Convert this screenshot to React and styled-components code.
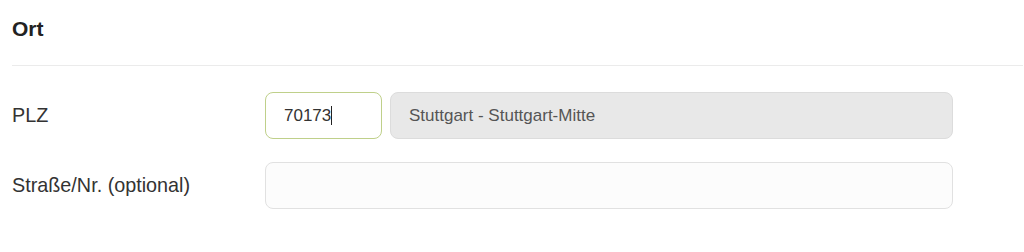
import React from "react";
import styled, { createGlobalStyle } from "styled-components";

const Global = createGlobalStyle`
  html, body { margin: 0; padding: 0; background: #fff; }
  body { font-family: "Liberation Sans", Arial, sans-serif; color: #333; }
`;

const Section = styled.section`
  padding: 0 1px 0 12px;
  width: 1024px;
  box-sizing: border-box;
`;

const Header = styled.div`
  height: 66px;
  display: flex;
  align-items: center;
  border-bottom: 1px solid #ebebeb;
  box-sizing: border-box;
  padding-bottom: 7px;
`;

const Title = styled.h2`
  margin: 0;
  font-size: 21px;
  font-weight: 700;
  color: #222;
`;

const Form = styled.div`
  display: flex;
  flex-direction: column;
  gap: 23px;
  padding-top: 26px;
`;

const Row = styled.div`
  display: grid;
  grid-template-columns: 253px 688px;
  align-items: center;
`;

const Label = styled.label`
  font-size: 19.8px;
  color: #333;
`;

const Group = styled.div`
  display: flex;
  gap: 8px;
`;

const Field = styled.div`
  height: 47px;
  box-sizing: border-box;
  border-radius: 8px;
  border: 1px solid ${(p) => (p.$focus ? "#bfd08a" : p.$disabled ? "#dcdcdc" : "#e1e1e1")};
  background: ${(p) => (p.$disabled ? "#e8e8e8" : p.$focus ? "#fff" : "#fcfcfc")};
  color: ${(p) => (p.$disabled ? "#555" : "#333")};
  font-size: 17px;
  display: flex;
  align-items: center;
  padding: 0 18px;
  width: ${(p) => p.$w || "auto"};
  flex: ${(p) => (p.$grow ? 1 : "none")};
`;

const Caret = styled.span`
  display: inline-block;
  width: 1px;
  height: 19px;
  background: #222;
`;

export default function App() {
  return (
    <>
      <Global />
      <Section>
        <Header>
          <Title>Ort</Title>
        </Header>
        <Form>
          <Row>
            <Label>PLZ</Label>
            <Group>
              <Field $focus $w="117px">
                70173
                <Caret />
              </Field>
              <Field $disabled $grow>
                Stuttgart - Stuttgart-Mitte
              </Field>
            </Group>
          </Row>
          <Row>
            <Label>Straße/Nr. (optional)</Label>
            <Field />
          </Row>
        </Form>
      </Section>
    </>
  );
}
